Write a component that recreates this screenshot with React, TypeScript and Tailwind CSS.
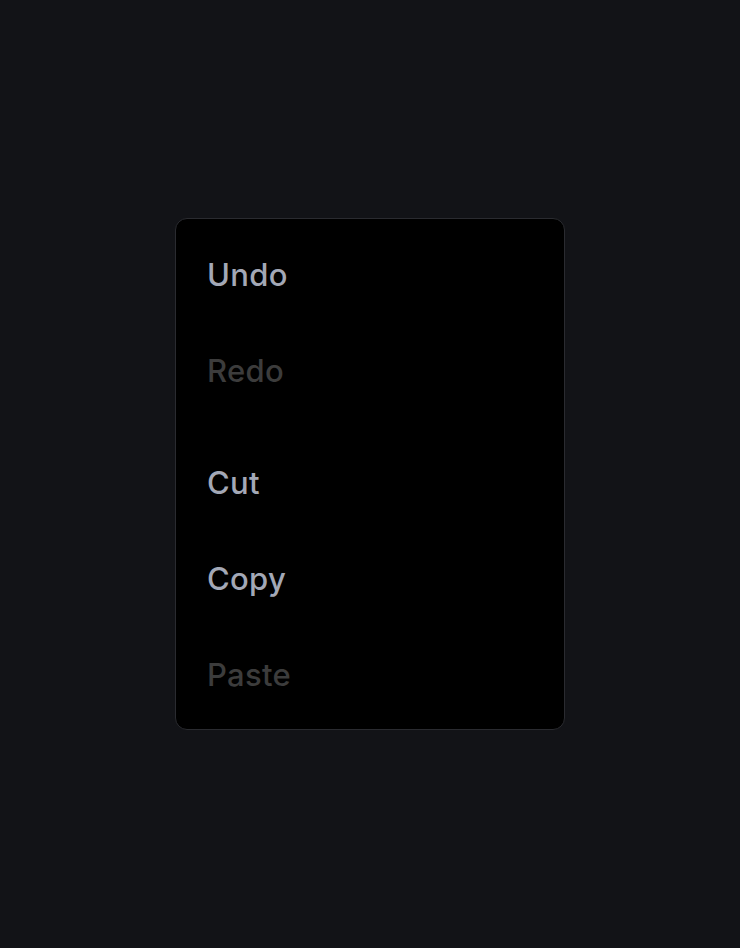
import React from "react";

type Item = { label: string; disabled?: boolean } | { separator: true };

const items: Item[] = [
  { label: "Undo" },
  { label: "Redo", disabled: true },
  { separator: true },
  { label: "Cut" },
  { label: "Copy" },
  { label: "Paste", disabled: true },
];

export default function App() {
  return (
    <div
      className="flex h-[948px] w-full items-center justify-center bg-[#121317]"
      style={{ fontFamily: "Inter, 'Noto Sans', sans-serif" }}
    >
      <div className="flex w-[390px] flex-col rounded-[12px] border border-[#2a2b30] bg-black py-[7px]">
        {items.map((it, i) =>
          "separator" in it ? (
            <div key={i} className="h-4" />
          ) : (
            <div
              key={i}
              className={
                "flex h-24 items-center px-[31px] pt-[2px] text-[31px] font-medium tracking-[0.01em] " +
                (it.disabled ? "text-[#3c3c3c]" : "text-[#a3a8b6]")
              }
            >
              {it.label}
            </div>
          )
        )}
      </div>
    </div>
  );
}
